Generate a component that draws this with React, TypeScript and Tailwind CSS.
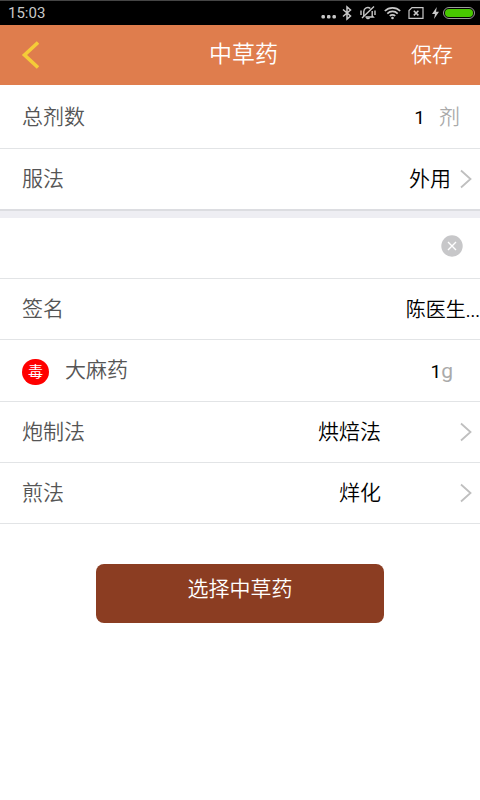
import { useState } from 'react';
import type { ReactNode } from 'react';

interface RowProps {
  children: ReactNode;
  className?: string;
}

function Row({ children, className = 'h-[61px]' }: RowProps) {
  return (
    <div className={`flex items-center border-b border-[#e2e4e6] pl-[22px] ${className}`}>
      {children}
    </div>
  );
}

interface PickerProps {
  label: string;
  value: string;
  gap: string;
  className?: string;
}

function PickerRow({ label, value, gap, className = 'h-[61px] border-b border-[#e2e4e6]' }: PickerProps) {
  return (
    <button
      type="button"
      className={`flex w-full items-center pr-2 pl-[22px] text-left ${className}`}
    >
      <span className="flex-1 pb-px text-[#555555]">{label}</span>
      <span className={`pb-px text-black ${gap}`}>{value}</span>
      <svg className="h-5 w-3" viewBox="0 0 12 20" fill="none" stroke="#bfbfbf" strokeWidth="1.8">
        <path d="M1 1.5L10.5 10L1 18.5" />
      </svg>
    </button>
  );
}

function StatusBar() {
  return (
    <div className="flex h-[25px] items-center justify-between border-t border-[#454545] bg-black pr-[5px] pl-2 text-[#c8c8c8]">
      <span className="text-[15px] font-normal">15:03</span>
      <div className="flex items-center">
        {/* More notifications */}
        <svg className="mr-1.5 h-4 w-4" viewBox="0 0 16 16" fill="currentColor">
          <rect x="1.5" y="10" width="3.4" height="3.4" rx="1.2" />
          <rect x="7" y="10" width="3.4" height="3.4" rx="1.2" />
          <rect x="12.5" y="10" width="3.4" height="3.4" rx="1.2" />
        </svg>
        {/* Bluetooth */}
        <svg className="mr-2 h-4 w-2.5" viewBox="0 0 10 16" fill="none" stroke="currentColor" strokeWidth="1.5">
          <path d="M1 4.5L8.5 11L5 14V2L8.5 5L1 11.5" />
        </svg>
        {/* Muted bell */}
        <svg className="mr-2 h-4 w-4" viewBox="0 0 16 16" fill="none" stroke="currentColor" strokeWidth="1.4">
          <path d="M3.8 11V6.5a4 4 0 0 1 6.6-3M12.2 6v5l1 1H5.5" />
          <path d="M6.5 12.5a1.6 1.6 0 0 0 3 0M14 1.5L2 13" />
          <path d="M1 5.5v4.5M15 5.5v4.5" />
        </svg>
        {/* Wifi */}
        <svg className="mr-[7px] h-4 w-[17px]" viewBox="0 0 17 16" fill="none" stroke="currentColor" strokeWidth="1.7">
          <path d="M0.8 6a11 11 0 0 1 15.4 0M3.3 8.6a7.4 7.4 0 0 1 10.4 0M5.8 11a3.8 3.8 0 0 1 5.4 0" />
          <circle cx="8.5" cy="13" r="1.3" fill="currentColor" stroke="none" />
        </svg>
        {/* No sim */}
        <svg className="mr-2 h-4 w-4" viewBox="0 0 16 16" fill="none" stroke="currentColor" strokeWidth="1.2">
          <path d="M4 2.6H15V13.4H1V5.6z" />
          <path d="M5.8 5.8l4.6 4.6M10.4 5.8l-4.6 4.6" strokeWidth="1.5" />
        </svg>
        {/* Charging */}
        <svg className="mr-1 h-4 w-[7px]" viewBox="0 0 7 16" fill="currentColor">
          <path d="M4.8 2L0 9h3L2 14l5-7.2H4z" />
        </svg>
        <div className="h-3 w-8 rounded-full border border-[#9a9a9a] p-px">
          <div className="h-full rounded-full bg-[#48c800]" />
        </div>
      </div>
    </div>
  );
}

export default function App() {
  const [doses, setDoses] = useState('1');
  const [note, setNote] = useState('');
  const [weight, setWeight] = useState('1');

  return (
    <div className="min-h-screen bg-white font-['Roboto','Noto_Sans_CJK_SC',sans-serif] text-[21px] leading-7 font-[350]">
      <StatusBar />

      <header className="grid h-[60px] grid-cols-[1fr_auto_1fr] items-center bg-[#df7d4d] pr-3.5 pl-[21px] text-white">
        <button type="button" aria-label="返回" className="justify-self-start">
          <svg className="h-7 w-[18px]" viewBox="0 0 18 28" fill="none" stroke="#f5cc38" strokeWidth="3.6">
            <path d="M17 1.5L3.5 14L17 26.5" />
          </svg>
        </button>
        <h1 className="text-[23px]">中草药</h1>
        <button type="button" className="mr-[13px] justify-self-end">保存</button>
      </header>

      <main>
        <Row className="h-16">
          <label htmlFor="doses" className="flex-1 text-[#555555]">总剂数</label>
          <input
            id="doses"
            value={doses}
            onChange={(e) => setDoses(e.target.value)}
            className="w-16 pt-0.5 text-right text-[19px] font-normal text-black outline-none"
          />
          <span className="mr-5 ml-3.5 text-[#aaaaaa]">剂</span>
        </Row>
        <PickerRow label="服法" value="外用" gap="mr-[9px]" className="h-[60px]" />

        <div className="h-[9px] border-t-2 border-[#dcdde1] bg-[#eeeef3]" />

        <Row>
          <input
            aria-label="备注"
            value={note}
            onChange={(e) => setNote(e.target.value)}
            className="min-w-0 flex-1 outline-none"
          />
          <button type="button" aria-label="清除" onClick={() => setNote('')} className="mr-[17px] pb-1">
            <svg className="h-[22px] w-[22px]" viewBox="0 0 22 22" fill="none">
              <circle cx="11" cy="11" r="10.7" fill="#c7c7c9" />
              <path d="M7 7l8 8M15 7l-8 8" stroke="white" strokeWidth="1.4" />
            </svg>
          </button>
        </Row>
        <Row>
          <span className="flex-1 text-[#555555]">签名</span>
          <span className="pt-0.5 text-xl text-black">陈医生<span className="text-lg font-normal">...</span></span>
        </Row>
        <Row className="h-[62px]">
          <span className="mt-0.5 mr-4 flex h-[26px] w-[27px] items-center justify-center rounded-full bg-[#ff0000] text-[15px] font-normal text-white">
            毒
          </span>
          <label htmlFor="weight" className="flex-1 pb-0.5 text-[#555555]">大麻药</label>
          <input
            id="weight"
            value={weight}
            onChange={(e) => setWeight(e.target.value)}
            className="w-16 pt-0.5 text-right text-[19px] font-normal text-black outline-none"
          />
          <span className="mr-[27px] font-normal text-[#aaaaaa]">g</span>
        </Row>
        <PickerRow label="炮制法" value="烘焙法" gap="mr-[79px]" />
        <PickerRow label="煎法" value="烊化" gap="mr-[79px]" />

        <div className="flex justify-center pt-10">
          <button type="button" className="h-[59px] w-3/5 rounded-lg bg-[#8b3d22] pb-2.5 text-white">
            选择中草药
          </button>
        </div>
      </main>
    </div>
  );
}
